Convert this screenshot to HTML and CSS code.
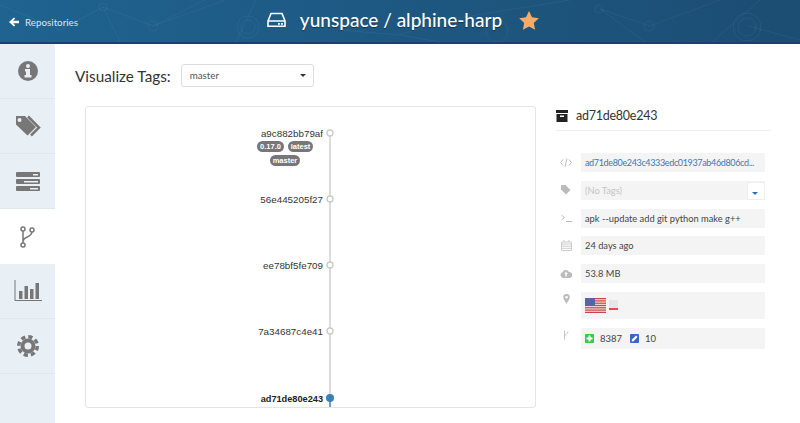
FILE: index.html
```html
<!DOCTYPE html>
<html lang="en">
<head>
  <meta charset="UTF-8">
  <title>yunspace / alphine-harp</title>
  <link rel="stylesheet" href="styles.css">
</head>
<body>

  <!-- Header -->
  <header class="topbar">
    <svg class="topbar-pattern" width="800" height="42" viewBox="0 0 800 42">
      <g fill="none" stroke="#fff" stroke-opacity="0.05">
        <path d="M0 5L60 30L103 7L153 26L205 0M103 7L120 42M153 26L225 0M236 42L256 0M340 30L400 35L440 42M400 35L445 20L570 0M600 9L645 42M650 26L600 9M650 26L720 0M712 42L760 0M748 26L800 40"/>
        <circle cx="103" cy="7" r="4"/>
        <circle cx="153" cy="26" r="5"/>
        <circle cx="248" cy="27" r="11"/>
        <circle cx="248" cy="27" r="7"/>
        <circle cx="497" cy="31" r="11"/>
        <circle cx="599" cy="9" r="4"/>
        <circle cx="649" cy="26" r="5"/>
        <circle cx="747" cy="27" r="14"/>
        <circle cx="747" cy="27" r="9"/>
      </g>
    </svg>
    <a class="back-link" href="#">
      <svg width="10" height="10" viewBox="0 0 10 10"><path fill="#fff" d="M0 5L5 0.500L6.200 1.700L4 3.700H10V6.300H4L6.200 8.300L5 9.500Z"/></svg>
      Repositories
    </a>
    <h1 class="repo-title">
      <svg class="repo-icon" width="19" height="16" viewBox="0 0 19 16">
        <path fill="none" stroke="#fff" stroke-width="1.600" d="M1 9L4 1.500H15L18 9V14.200H1ZM1 9H18"/>
        <rect x="11" y="11" width="1.800" height="1.800" fill="#fff"/>
        <rect x="14" y="11" width="1.800" height="1.800" fill="#fff"/>
      </svg>
      <span>yunspace / alphine-harp</span>
      <svg class="star" width="20" height="19" viewBox="0 0 20 19"><path fill="#f7ab67" d="M10 0L13 6.300L19.800 7.200L14.800 12L16.100 18.800L10 15.500L3.900 18.800L5.200 12L0.200 7.200L7 6.300Z"/></svg>
    </h1>
  </header>

  <div class="layout">
    <!-- Sidebar -->
    <nav class="sidebar">
      <a class="side-item" href="#">
        <svg width="22" height="22" viewBox="0 0 22 22">
          <circle cx="11" cy="11" r="10" fill="#777"/>
          <circle cx="11" cy="6" r="2" fill="#e8f0f6"/>
          <path fill="#e8f0f6" d="M8 9H13V15H14.500V17.500H7.500V15H9V11.500H8Z"/>
        </svg>
      </a>
      <a class="side-item" href="#">
        <svg width="26" height="22" viewBox="0 0 26 22">
          <path fill="#777" d="M1 1H10L21 12L12.500 20.500L1 9.500ZM4.500 3A2 2 0 1 0 4.600 7A2 2 0 1 0 4.500 3Z" fill-rule="evenodd"/>
          <path fill="none" stroke="#777" stroke-width="2.500" d="M13 1.500L24 12.500L16 20.500"/>
        </svg>
      </a>
      <a class="side-item" href="#">
        <svg width="24" height="20" viewBox="0 0 24 20">
          <rect y="1" width="24" height="5" rx="1" fill="#777"/>
          <rect y="8" width="24" height="5" rx="1" fill="#777"/>
          <rect y="15" width="24" height="5" rx="1" fill="#777"/>
          <rect x="17" y="3" width="5" height="1.500" fill="#e8f0f6"/>
          <rect x="8" y="10" width="14" height="1.500" fill="#e8f0f6"/>
          <rect x="14" y="17" width="8" height="1.500" fill="#e8f0f6"/>
        </svg>
      </a>
      <a class="side-item active" href="#">
        <svg width="15" height="22" viewBox="0 0 15 22">
          <g fill="none" stroke="#777" stroke-width="1.500">
            <circle cx="3" cy="3" r="2"/>
            <circle cx="12" cy="4" r="2"/>
            <circle cx="3" cy="19" r="2"/>
            <path d="M3 5V17M3 15C4 10 11 12 12 6"/>
          </g>
        </svg>
      </a>
      <a class="side-item" href="#">
        <svg width="28" height="22" viewBox="0 0 28 22">
          <path fill="none" stroke="#777" stroke-width="1" d="M1 0V20.500H28"/>
          <rect x="5" y="11" width="3.500" height="8" fill="#777"/>
          <rect x="10.500" y="6" width="3.500" height="13" fill="#777"/>
          <rect x="16" y="9" width="3.500" height="10" fill="#777"/>
          <rect x="21.500" y="3" width="3.500" height="16" fill="#777"/>
        </svg>
      </a>
      <a class="side-item" href="#">
        <svg width="22" height="22" viewBox="0 0 22 22">
          <circle cx="11" cy="11" r="9.300" fill="none" stroke="#777" stroke-width="3.400" stroke-dasharray="4.300 3"/>
          <circle cx="11" cy="11" r="5.500" fill="none" stroke="#777" stroke-width="4"/>
        </svg>
      </a>
      <div class="side-rest"></div>
    </nav>

    <main class="content">
      <div class="tag-filter">
        <label class="tag-label">Visualize Tags:</label>
        <div class="select-box">master<i class="caret"></i></div>
      </div>

      <div class="columns">
        <!-- Tag graph -->
        <section class="graph-card">
          <svg class="graph" width="449" height="300" viewBox="0 0 449 300">
            <line x1="244" y1="26" x2="244" y2="300" stroke="#dcdcdc" stroke-width="2"/>
            <line x1="244" y1="291" x2="244" y2="300" stroke="#6da3c9" stroke-width="2"/>
            <g class="node-label">
              <text x="237" y="30">a9c882bb79af</text>
              <text x="237" y="96">56e445205f27</text>
              <text x="237" y="162">ee78bf5fe709</text>
              <text x="237" y="228">7a34687c4e41</text>
              <text x="237" y="295" class="current">ad71de80e243</text>
            </g>
            <g fill="#fff" stroke="#c9c9c9" stroke-width="1.300">
              <circle cx="244" cy="26" r="3"/>
              <circle cx="244" cy="92" r="3"/>
              <circle cx="244" cy="158" r="3"/>
              <circle cx="244" cy="224" r="3"/>
            </g>
            <circle cx="244" cy="291" r="4" fill="#3b7fb5"/>
            <g fill="#777">
              <rect x="171" y="34" width="27" height="11" rx="5.500"/>
              <rect x="202" y="34" width="25" height="11" rx="5.500"/>
              <rect x="184" y="48" width="30" height="11" rx="5.500"/>
            </g>
            <g class="pill-text">
              <text x="184.500" y="42">0.17.0</text>
              <text x="214.500" y="42">latest</text>
              <text x="199" y="56">master</text>
            </g>
          </svg>
        </section>

        <!-- Image details -->
        <aside class="details">
          <h2 class="details-title">
            <svg width="12" height="12" viewBox="0 0 12 12"><path fill="#222" d="M0 0H12V3H0ZM0.500 4H11.500V12H0.500ZM4 5.500V7H8V5.500Z" fill-rule="evenodd"/></svg>
            ad71de80e243
          </h2>
          <div class="detail-row">
            <span class="detail-icon"><svg width="12" height="9" viewBox="0 0 12 9"><path fill="none" stroke="#bbb" d="M3 1.500L0.700 4.500L3 7.500M9 1.500L11.300 4.500L9 7.500M7 0.500L5 8.500"/></svg></span>
            <div class="detail-value link">ad71de80e243c4333edc01937ab46d806cd...</div>
          </div>
          <div class="detail-row">
            <span class="detail-icon"><svg width="10" height="10" viewBox="0 0 10 10"><path fill="#bbb" d="M0 0H4.500L9.500 5L5 9.500L0 4.500Z"/></svg></span>
            <div class="detail-value muted">(No Tags)<span class="tag-btn"><i class="caret blue"></i></span></div>
          </div>
          <div class="detail-row">
            <span class="detail-icon"><svg width="11" height="8" viewBox="0 0 11 8"><path fill="none" stroke="#bbb" d="M0.500 1L3.500 3.500L0.500 6M5 7.500H11"/></svg></span>
            <div class="detail-value">apk --update add git python make g++</div>
          </div>
          <div class="detail-row">
            <span class="detail-icon"><svg width="11" height="11" viewBox="0 0 11 11"><path fill="none" stroke="#ccc" d="M0.500 2H10.500V10.500H0.500ZM0.500 4H10.500M3 0V2M8 0V2M0.500 6.200H10.500M0.500 8.300H10.500"/></svg></span>
            <div class="detail-value">24 days ago</div>
          </div>
          <div class="detail-row">
            <span class="detail-icon"><svg width="12" height="9" viewBox="0 0 12 9"><path fill="#bbb" d="M3 9A3 3 0 0 1 2.500 3.200A3.500 3.500 0 0 1 9 3A3 3 0 0 1 9.500 9Z"/><path fill="#f4f4f4" d="M6 2.500L8 5H6.800V7.500H5.200V5H4Z"/></svg></span>
            <div class="detail-value">53.8 MB</div>
          </div>
          <div class="detail-row tall">
            <span class="detail-icon top"><svg width="7" height="10" viewBox="0 0 7 10"><path fill="#bbb" fill-rule="evenodd" d="M3.500 0A3.300 3.300 0 0 1 6.800 3.300C6.800 5 4.500 8 3.500 10C2.500 8 0.200 5 0.200 3.300A3.300 3.300 0 0 1 3.500 0ZM3.500 2A1.300 1.300 0 1 0 3.500 4.600A1.300 1.300 0 1 0 3.500 2Z"/></svg></span>
            <div class="detail-value flags">
              <svg width="21" height="15" viewBox="0 0 21 15">
                <rect width="21" height="15" fill="#f3e4e4"/>
                <g fill="#c8434c"><rect y="0" width="21" height="1.200"/><rect y="2.300" width="21" height="1.200"/><rect y="4.600" width="21" height="1.200"/><rect y="6.900" width="21" height="1.200"/><rect y="9.200" width="21" height="1.200"/><rect y="11.500" width="21" height="1.200"/><rect y="13.800" width="21" height="1.200"/></g>
                <rect width="10" height="7.500" fill="#5a62a8"/>
              </svg>
              <svg width="9" height="10" viewBox="0 0 9 10">
                <rect width="9" height="8" fill="#e6e6e6"/>
                <rect y="8" width="9" height="2" fill="#f2434e"/>
              </svg>
            </div>
          </div>
          <div class="detail-row layers">
            <span class="detail-icon top"><svg width="6" height="10" viewBox="0 0 6 10"><path fill="none" stroke="#c4c4c4" d="M1.500 0.500V9.500M1.500 6.500C2 4.500 4.500 4.500 5 1.500"/></svg></span>
            <div class="detail-value diff">
              <svg width="9" height="9" viewBox="0 0 9 9"><rect width="9" height="9" rx="1" fill="#35c94a"/><path fill="#fff" d="M3.500 1.500H5.500V3.500H7.500V5.500H5.500V7.500H3.500V5.500H1.500V3.500H3.500Z"/></svg>
              <span class="count">8387</span>
              <svg width="9" height="9" viewBox="0 0 9 9"><rect width="9" height="9" rx="1" fill="#3a62d0"/><path fill="#fff" d="M6 1.500L7.500 3L3.500 7.200L1.700 7.500L2 5.500Z"/></svg>
              <span class="count">10</span>
            </div>
          </div>
        </aside>
      </div>
    </main>
  </div>

</body>
</html>
```

FILE: styles.css
```css
* {
  box-sizing: border-box;
}
body {
  margin: 0;
  height: 423px;
  overflow: hidden;
  background: #fff;
  font-family: Lato, 'Noto Sans', sans-serif;
  color: #333;
}
a {
  text-decoration: none;
}

/* header */
.topbar {
  position: relative;
  height: 44px;
  display: flex;
  align-items: center;
  justify-content: center;
  background: linear-gradient(90deg, #1f6390, #1c4d73);
  border-bottom: 2px solid #1a3f78;
}
.topbar-pattern {
  position: absolute;
  left: 0;
  top: 0;
}
.back-link {
  position: absolute;
  left: 9px;
  top: 15px;
  display: flex;
  align-items: center;
  gap: 6px;
  color: #dbe6ee;
  font-size: 9.800px;
  line-height: 14px;
}
.repo-title {
  position: relative;
  margin: 0 0 2px 6px;
  display: flex;
  align-items: center;
  color: #fff;
  font-size: 19px;
  font-weight: 500;
  line-height: 26px;
  text-shadow: 0 1px 1px rgba(0,0,0,0.4);
}
.repo-icon {
  margin-right: 14px;
}
.star {
  margin-left: 17px;
}

/* sidebar */
.layout {
  display: flex;
  height: 379px;
}
.sidebar {
  width: 55px;
  display: flex;
  flex-direction: column;
  flex-shrink: 0;
  background: #e8f0f6;
}
.side-item {
  height: 55px;
  display: flex;
  align-items: center;
  justify-content: center;
  border-bottom: 1px solid #e0e8ee;
}
.side-item.active {
  background: #fff;
  border-bottom: 0;
}
.side-rest {
  flex: 1;
}

/* main content */
.content {
  flex: 1;
  padding: 20px 0 0 20px;
}
.tag-filter {
  display: flex;
  align-items: center;
  gap: 10px;
}
.tag-label {
  font-size: 15.300px;
  color: #333;
}
.select-box {
  position: relative;
  width: 133px;
  height: 23px;
  padding-left: 8px;
  border: 1px solid #ddd;
  border-radius: 3px;
  font-size: 9.800px;
  line-height: 21px;
  color: #555;
}
.caret {
  position: absolute;
  right: 7px;
  top: 9px;
  border-top: 3px solid #333;
  border-left: 3px solid transparent;
  border-right: 3px solid transparent;
}
.caret.blue {
  right: 6px;
  top: 9px;
  border-top-color: #2a6fb0;
}
.columns {
  display: flex;
  margin: 19px 0 0 10px;
}

/* graph */
.graph-card {
  width: 451px;
  height: 302px;
  flex-shrink: 0;
  border: 1px solid #e4e4e4;
  border-radius: 3px;
  overflow: hidden;
}
.graph {
  display: block;
}
.node-label text {
  font-family: 'Liberation Sans', Arial, sans-serif;
  font-size: 9.800px;
  text-anchor: end;
  fill: #333;
}
.node-label text.current {
  font-size: 9.200px;
  font-weight: bold;
  fill: #222;
}
.pill-text text {
  font-family: 'Liberation Sans', Arial, sans-serif;
  font-size: 7.500px;
  font-weight: bold;
  text-anchor: middle;
  fill: #fff;
}

/* details panel */
.details {
  width: 215px;
  margin-left: 20px;
}
.details-title {
  display: flex;
  align-items: center;
  gap: 8px;
  height: 25px;
  margin: 0 0 22px;
  padding-bottom: 5px;
  border-bottom: 1px solid #eee;
  font-size: 12.500px;
  letter-spacing: -0.25px;
  font-weight: 400;
  color: #333;
}
.detail-row {
  display: flex;
  align-items: center;
  height: 19px;
  margin-bottom: 8.750px;
}
.detail-row.tall {
  height: 27px;
  align-items: flex-start;
}
.detail-row.layers {
  height: 21px;
  align-items: flex-start;
}
.detail-icon {
  width: 25px;
  display: flex;
  justify-content: center;
  padding-right: 5px;
}
.detail-icon.top {
  padding-top: 2px;
}
.detail-value {
  position: relative;
  width: 184px;
  height: 100%;
  padding-left: 4px;
  background: #f4f4f4;
  font-size: 9.300px;
  line-height: 19px;
  color: #444;
  white-space: nowrap;
  overflow: hidden;
}
.detail-value.link {
  color: #3a78b5;
  font-size: 9px;
  letter-spacing: -0.35px;
}
.detail-value.muted {
  color: #c4c4c4;
}
.tag-btn {
  position: absolute;
  right: 0;
  top: 1px;
  width: 18px;
  height: 18px;
  background: #fff;
  border: 1px solid #eee;
}
.detail-value.flags {
  display: flex;
  align-items: center;
  gap: 3px;
}
.detail-value.diff {
  display: flex;
  align-items: center;
  gap: 6px;
  font-size: 9.500px;
}
.count {
  margin-right: 2px;
}
```
